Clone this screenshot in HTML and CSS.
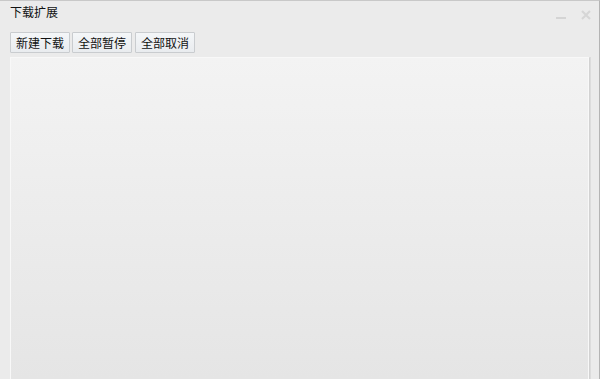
FILE: index.html
```html
<!DOCTYPE html>
<html>
<head>
<meta charset="utf-8">
<link rel="stylesheet" href="styles.css">
</head>
<body>
<div class="window">
  <div class="titlebar">
    <span class="title">下载扩展</span>
    <div class="controls">
      <svg class="ctl" width="12" height="12" viewBox="0 0 12 12"><rect x="1" y="8" width="10" height="2" fill="#d4d4d4"/></svg>
      <svg class="ctl" width="12" height="12" viewBox="0 0 12 12"><path d="M2 2 L10 10 M10 2 L2 10" stroke="#d6d6d6" stroke-width="2"/></svg>
    </div>
  </div>
  <div class="toolbar">
    <button class="btn">新建下载</button>
    <button class="btn">全部暂停</button>
    <button class="btn btn-last">全部取消</button>
  </div>
  <div class="panel"></div>
</div>
</body>
</html>
```
FILE: styles.css
```css
html, body {
  margin: 0;
  padding: 0;
  width: 600px;
  height: 379px;
  overflow: hidden;
  background: #ebebeb;
}
.window {
  box-sizing: border-box;
  width: 600px;
  height: 379px;
  border-top: 1px solid #c8c8c8;
  border-right: 1px solid #b4b4b4;
  background: #ebebeb;
  display: flex;
  flex-direction: column;
  font-family: "Noto Sans CJK SC", "Liberation Sans", sans-serif;
  font-size: 12px;
  color: #111;
}
.titlebar {
  height: 30px;
  display: flex;
  justify-content: space-between;
  align-items: flex-start;
  padding: 2px 0 0 10px;
  box-sizing: border-box;
}
.title {
  line-height: 18px;
}
.controls {
  display: flex;
  gap: 13px;
  padding: 6px 7px 0 0;
}
.ctl { display: block; }
.toolbar {
  display: flex;
  gap: 2px;
  padding: 1px 0 0 10px;
  height: 26px;
  box-sizing: border-box;
}
.btn {
  width: 60px;
  height: 21px;
  margin: 0;
  padding: 0;
  border: 1px solid #c9cccf;
  border-radius: 1px;
  background: linear-gradient(#f4f6f8, #e9ecef);
  font-family: inherit;
  font-size: 12px;
  color: #111;
  line-height: 19px;
}
.btn-last { margin-left: 1px; }
.panel {
  margin: 0 10px 0 10px;
  flex: 1;
  border: 1px solid #f8f8f8;
  border-bottom: none;
  box-shadow: 1px 1px 0 #d2d2d2, 2px 0 0 #dcdcdc;
  background: linear-gradient(#f3f3f3, #e5e5e5);
}
```
